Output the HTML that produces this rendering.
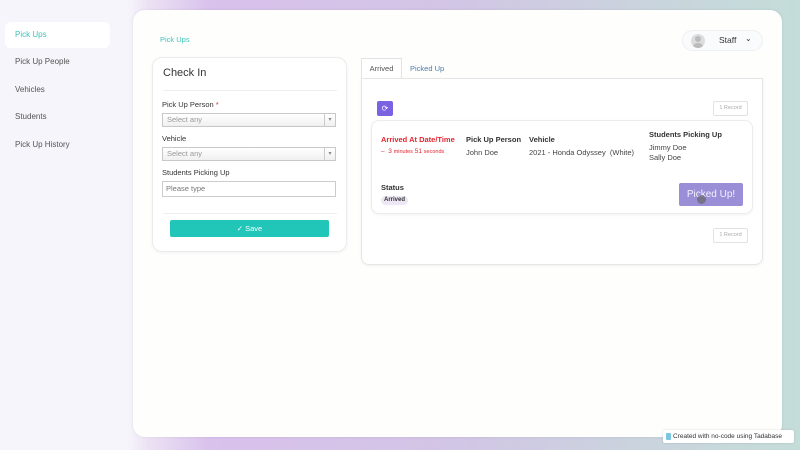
<!DOCTYPE html>
<html><head><meta charset="utf-8"><style>
*{box-sizing:border-box;margin:0;padding:0}
body{width:800px;height:450px;overflow:hidden;font-family:"Liberation Sans",sans-serif;background:#f6f5fb;position:relative;color:#333}
.bg{position:absolute;left:128px;top:0;width:672px;height:450px;background:linear-gradient(90deg,#f6f5fb 0%,#ece2f4 3%,#d9c2ec 12%,#d3c4e6 45%,#cad3de 75%,#c4ddd9 100%)}
.side{position:absolute;left:0;top:0;width:128px;height:450px;background:#f6f5fb}
.nav{position:absolute;left:5px;width:105px;height:26px;font-size:8px;padding-left:10px;line-height:26px;color:#555}
.nav.act{background:#fff;border-radius:6px;color:#3cc4b8}
.main{position:absolute;left:133px;top:10px;width:649px;height:427px;background:#fefefd;border-radius:12px;box-shadow:0 0 3px rgba(0,0,0,.08)}
.abs{position:absolute}
.card{position:absolute;background:#fff;border:1px solid #ececec;border-radius:10px;box-shadow:0 1px 3px rgba(0,0,0,.05)}
.lbl{font-size:7.5px;color:#333}
.sel{position:absolute;left:9px;width:174px;height:14px;border:1px solid #c8c8c8;font-size:7.5px;color:#999;padding-left:4px;line-height:12px;background:linear-gradient(#fff,#f0f0f0)}
.sel:after{content:"▾";position:absolute;right:0;top:0;width:10px;height:12px;border-left:1px solid #ccc;font-size:6px;color:#888;text-align:center}
.rec{position:absolute;width:35px;height:15px;border:1px solid #e2e2e2;border-radius:2px;font-size:5.5px;color:#aaa;text-align:center;line-height:13px}
.b{font-weight:bold;font-size:7.5px;color:#333}
.t{font-size:7.5px;color:#444}
</style></head><body>
<div class="bg"></div>
<div class="side">
<div class="nav act" style="top:22px">Pick Ups</div>
<div class="nav" style="top:49px">Pick Up People</div>
<div class="nav" style="top:77px">Vehicles</div>
<div class="nav" style="top:104px">Students</div>
<div class="nav" style="top:132px">Pick Up History</div>
</div>
<div class="main">
<div class="abs" style="left:27px;top:25px;font-size:7.5px;color:#3cc4b8">Pick Ups</div>
<div class="abs" style="left:549px;top:20px;width:81px;height:21px;border:1px solid #eef0f3;border-radius:11px;background:#fafbfc">
<div class="abs" style="left:8px;top:3px;width:14px;height:14px;border-radius:50%;background:#ddd;overflow:hidden"><div class="abs" style="left:4px;top:2px;width:6px;height:6px;border-radius:50%;background:#bbb"></div><div class="abs" style="left:2px;top:9px;width:10px;height:8px;border-radius:50%;background:#bbb"></div></div>
<div class="abs" style="left:36px;top:4px;font-size:8.5px;color:#333">Staff</div>
<div class="abs" style="left:62px;top:3px;font-size:8px;color:#333">⌄</div>
</div>
<div class="card" style="left:19px;top:47px;width:195px;height:195px">
<div class="abs" style="left:10px;top:9px;font-size:11px;color:#333">Check In</div>
<div class="abs" style="left:10px;top:32px;width:174px;height:1px;background:#eee"></div>
<div class="abs lbl" style="left:9px;top:42px">Pick Up Person <span style="color:#d33">*</span></div>
<div class="sel" style="top:55px">Select any</div>
<div class="abs lbl" style="left:9px;top:76px">Vehicle</div>
<div class="sel" style="top:89px">Select any</div>
<div class="abs lbl" style="left:9px;top:110px">Students Picking Up</div>
<div class="abs" style="left:9px;top:123px;width:174px;height:16px;border:1px solid #ccc;font-size:7.5px;color:#777;padding-left:3px;line-height:14px">Please type</div>
<div class="abs" style="left:10px;top:155px;width:174px;height:1px;background:#eee"></div>
<div class="abs" style="left:17px;top:162px;width:159px;height:17px;background:#22c6b9;border-radius:2px;color:#fff;font-size:7.5px;text-align:center;line-height:17px">✓ Save</div>
</div>
<div class="abs" style="left:228px;top:48px;width:41px;height:20px;border:1px solid #e3e3e3;border-bottom:none;background:#fff;font-size:7.5px;color:#555;text-align:center;line-height:19px">Arrived</div>
<div class="abs" style="left:277px;top:54px;font-size:7.5px;color:#4a7ea8">Picked Up</div>
<div class="card" style="left:228px;top:68px;width:402px;height:187px;border-radius:0 0 8px 8px;border-color:#e6e6e6">
<div class="abs" style="left:15px;top:22px;width:16px;height:15px;background:#7b62e0;border-radius:2px;color:#fff;font-size:8px;text-align:center;line-height:15px">⟳</div>
<div class="rec" style="left:351px;top:22px">1 Record</div>
<div class="card" style="left:9px;top:41px;width:382px;height:94px;border-radius:8px">
<div class="abs" style="left:9px;top:14px;font-size:7.5px;font-weight:bold;color:#e0262f">Arrived At Date/Time</div>
<div class="abs" style="left:9px;top:27px;font-size:6.5px;color:#e0262f">–&nbsp; 3 <span style="font-size:5.5px">minutes</span> 51 <span style="font-size:5.5px">seconds</span></div>
<div class="abs b" style="left:94px;top:14px">Pick Up Person</div>
<div class="abs t" style="left:94px;top:27px">John Doe</div>
<div class="abs b" style="left:157px;top:14px">Vehicle</div>
<div class="abs t" style="left:157px;top:27px">2021 - Honda Odyssey&nbsp; (White)</div>
<div class="abs b" style="left:277px;top:9px">Students Picking Up</div>
<div class="abs t" style="left:277px;top:22px;line-height:10px">Jimmy Doe<br>Sally Doe</div>
<div class="abs b" style="left:9px;top:62px">Status</div>
<div class="abs" style="left:9px;top:75px;padding:0 3px;height:9px;background:#ece6f5;border-radius:5px;font-size:6px;font-weight:bold;color:#333;line-height:9px">Arrived</div>
<div class="abs" style="left:307px;top:62px;width:64px;height:23px;background:#9a8ed6;border-radius:2px;color:#f4f0ff;font-size:10px;text-align:center;line-height:23px">Picked Up!</div>
<div class="abs" style="left:325px;top:74px;width:9px;height:9px;border-radius:50%;background:#666;opacity:.7"></div>
</div>
<div class="rec" style="left:351px;top:149px">1 Record</div>
</div>
</div>
<div class="abs" style="left:663px;top:430px;width:131px;height:13px;background:#fff;border-radius:2px;font-size:6.5px;color:#333;line-height:13px;padding-left:10px;box-shadow:0 0 2px rgba(0,0,0,.15)"><span class="abs" style="left:3px;top:3px;width:5px;height:7px;background:#7cc6e0;border-radius:1px"></span>Created with no-code using Tadabase</div>
</body></html>
